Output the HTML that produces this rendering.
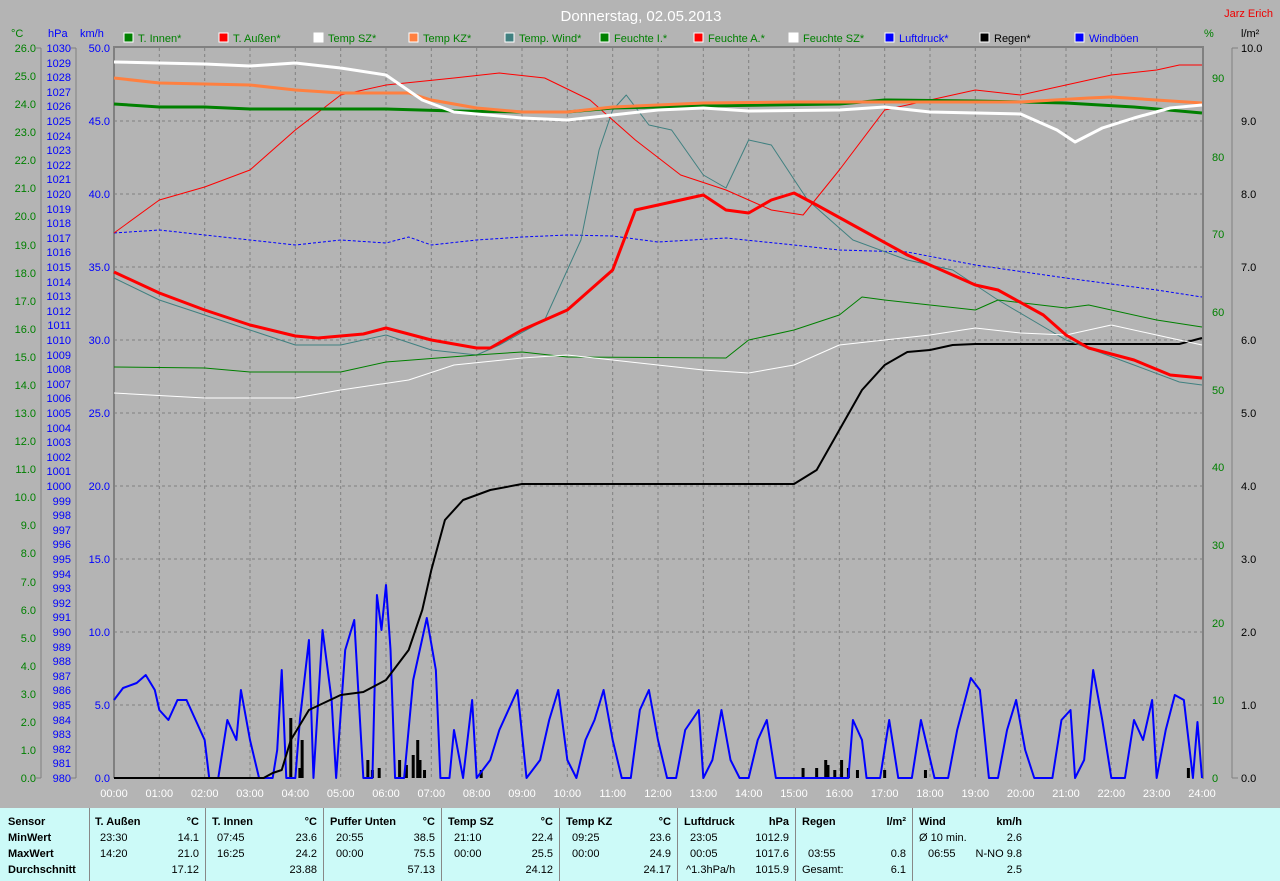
<!DOCTYPE html>
<html><head><meta charset="utf-8"><style>
body{margin:0;width:1280px;height:881px;background:#b4b4b4;overflow:hidden;font-family:"Liberation Sans",sans-serif;}
svg{position:absolute;left:0;top:0}
.t{position:absolute;font-size:11px;white-space:nowrap}
#tbl{position:absolute;left:0;top:808px;width:1280px;height:73px;background:#ccfaf8;}
.c{position:absolute;font-size:11px;white-space:nowrap;color:#000}
.b{font-weight:bold}
.r{text-align:right}
.vl{position:absolute;top:0;width:1px;height:73px;background:#888}
</style></head><body>
<svg width="1280" height="881" font-family="Liberation Sans, sans-serif" font-size="11">
<text x="641" y="21" fill="#fff" font-size="15" text-anchor="middle">Donnerstag, 02.05.2013</text>
<text x="1273" y="17" fill="#e00" font-size="11" text-anchor="end">Jarz Erich</text>
<!-- legend -->
<g font-size="11">
<rect x="124" y="33" width="9" height="9" fill="#008000" stroke="#fff"/><text x="138" y="42" fill="#008000">T. Innen*</text>
<rect x="219" y="33" width="9" height="9" fill="#f00" stroke="#fff"/><text x="233" y="42" fill="#008000">T. Außen*</text>
<rect x="314" y="33" width="9" height="9" fill="#fff" stroke="#fff"/><text x="328" y="42" fill="#008000">Temp SZ*</text>
<rect x="409" y="33" width="9" height="9" fill="#ff8040" stroke="#fff"/><text x="423" y="42" fill="#008000">Temp KZ*</text>
<rect x="505" y="33" width="9" height="9" fill="#408080" stroke="#fff"/><text x="519" y="42" fill="#008000">Temp. Wind*</text>
<rect x="600" y="33" width="9" height="9" fill="#008000" stroke="#fff"/><text x="614" y="42" fill="#008000">Feuchte I.*</text>
<rect x="694" y="33" width="9" height="9" fill="#f00" stroke="#fff"/><text x="708" y="42" fill="#008000">Feuchte A.*</text>
<rect x="789" y="33" width="9" height="9" fill="#fff" stroke="#fff"/><text x="803" y="42" fill="#008000">Feuchte SZ*</text>
<rect x="885" y="33" width="9" height="9" fill="#00f" stroke="#fff"/><text x="899" y="42" fill="#00f">Luftdruck*</text>
<rect x="980" y="33" width="9" height="9" fill="#000" stroke="#fff"/><text x="994" y="42" fill="#000">Regen*</text>
<rect x="1075" y="33" width="9" height="9" fill="#00f" stroke="#fff"/><text x="1089" y="42" fill="#00f">Windböen</text>
</g>
<text x="11" y="37" fill="#008000">°C</text>
<text x="48" y="37" fill="#00f">hPa</text>
<text x="80" y="37" fill="#00f">km/h</text>
<text x="1204" y="37" fill="#008000">%</text>
<text x="1241" y="37" fill="#000">l/m²</text>
<!-- plot grid -->
<g stroke="#808080" stroke-dasharray="3,3" stroke-width="1">
<path d="M159.3 48V778M204.7 48V778M250 48V778M295.3 48V778M340.7 48V778M386 48V778M431.3 48V778M476.7 48V778M522 48V778M567.3 48V778M612.7 48V778M658 48V778M703.3 48V778M748.7 48V778M794 48V778M839.3 48V778M884.7 48V778M930 48V778M975.3 48V778M1020.7 48V778M1066 48V778M1111.3 48V778M1156.7 48V778"/>
<path d="M114 121H1202M114 194H1202M114 267H1202M114 340H1202M114 413H1202M114 486H1202M114 559H1202M114 632H1202M114 705H1202"/>
</g>
<path d="M114 778V47H1203V779" fill="none" stroke="#808080" stroke-width="2"/>
<!-- left axes -->
<g stroke="#808080" fill="none">
<path d="M41 48V778M76 48V778M1232 48V778"/>
</g>
<g id="axes"></g>
<!-- curves -->
<g transform="translate(114,0) scale(45.333,1)" fill="none" stroke-linejoin="round">
<!-- rain bars -->
<g stroke="#000" stroke-width="3" vector-effect="non-scaling-stroke">
<path vector-effect="non-scaling-stroke" d="M3.9 778V718M4.1 778V768M4.15 778V740M5.6 778V760M5.7 778V770M5.85 778V768M6.3 778V760M6.45 778V765M6.6 778V755M6.7 778V740M6.75 778V760M6.85 778V770M8.1 778V770M15.2 778V768M15.5 778V768M15.7 778V760M15.75 778V765M15.9 778V770M16.05 778V760M16.2 778V768M16.4 778V770M17.0 778V770M17.9 778V770M23.7 778V768"/>
</g>
<path vector-effect="non-scaling-stroke" stroke="#00f" stroke-width="2" d="M0 700L0.2 688L0.5 683L0.7 675L0.9 690L1 710L1.2 720L1.4 700L1.6 700L1.8 720L2 740L2.1 778L2.3 778L2.5 720L2.7 740L2.8 690L3 740L3.2 778L3.5 778L3.6 750L3.7 670L3.8 778L4 778L4.1 720L4.3 640L4.4 778L4.6 630L4.8 700L4.9 778L5.1 650L5.3 620L5.4 700L5.5 778L5.7 778L5.8 595L5.9 630L6 585L6.1 650L6.2 778L6.4 778L6.6 680L6.9 618L7.1 670L7.2 778L7.4 778L7.5 730L7.7 778L7.9 700L8 778L8.3 760L8.5 730L8.9 690L9.1 778L9.4 760L9.6 720L9.8 690L10 760L10.2 778L10.4 740L10.6 720L10.8 690L11 740L11.2 778L11.4 778L11.6 710L11.8 690L12 740L12.2 778L12.4 778L12.6 730L12.9 710L13 778L13.2 760L13.4 710L13.6 760L13.8 778L14 778L14.2 740L14.4 720L14.6 778L16.2 778L16.3 720L16.5 740L16.6 778L16.9 778L17.1 720L17.3 778L17.6 778L17.8 720L18.1 778L18.4 778L18.6 730L18.9 678L19.1 690L19.3 778L19.5 778L19.7 730L19.9 700L20.1 750L20.3 778L20.7 778L20.9 720L21.1 710L21.2 778L21.4 760L21.6 670L21.8 720L22 778L22.3 778L22.5 720L22.7 740L22.9 700L23 778L23.2 730L23.4 695L23.6 700L23.8 778L23.9 722L24 778"/>
<path vector-effect="non-scaling-stroke" stroke="#000" stroke-width="2" d="M0 778L3.3 778L3.5 773L3.7 770L3.9 740L4.3 710L5 695L5.5 692L6 680L6.5 650L6.8 610L7 570L7.3 520L7.7 500L8.3 490L9 484L15 484L15.5 470L16 430L16.5 390L17 365L17.5 352L18 350L18.5 345L19 344L23.5 344L24 338"/>
<path vector-effect="non-scaling-stroke" stroke="#00f" stroke-width="1" stroke-dasharray="3,2" d="M0 233L1 230L3 240L4 245L5 240L6 243L6.5 237L7 245L8 240L9 237L10 235L11 236L12 242L13.5 238L15 245L16 250L17.5 252L19 265L21 278L23 290L24 297"/>
<path vector-effect="non-scaling-stroke" stroke="#408080" stroke-width="1" d="M0 278L1 300L2 315L3 330L4 345L5 345L6 335L7 350L8 355L8.5 345L9.5 320L10.3 240L10.7 150L11 110L11.3 95L11.8 125L12.3 130L13 175L13.5 188L14 140L14.5 145L15.3 200L16.3 240L17.5 260L18.5 270L19.5 300L21 340L22.5 365L23.5 382L24 385"/>
<path vector-effect="non-scaling-stroke" stroke="#008000" stroke-width="1" d="M0 367L2 368L3 372L5 372L6 362L8 355L9 352L10 357L13.5 358L14 340L15 330L16 315L16.5 297L17 300L18 305L19 310L19.5 300L21 308L21.5 305L23 320L24 327"/>
<path vector-effect="non-scaling-stroke" stroke="#fff" stroke-width="1" d="M0 393L2 398L4 398L5 390L6.5 380L7.5 365L9 358L10 355L11 360L13 370L14 373L15 365L16 345L17 340L18 335L19 328L20 333L21 335L22 325L23 335L24 345"/>
<path vector-effect="non-scaling-stroke" stroke="#f00" stroke-width="1" d="M0 233L1 200L2 187L3 170L4 130L5 95L6 85L7.5 78L8.5 73L9.5 78L10.5 100L11.5 140L12.5 175L13.5 190L14.5 210L15.2 215L16 170L17 110L18 100L19 90L20 95L21 85L22 75L23 70L23.5 65L24 65"/>
<path vector-effect="non-scaling-stroke" stroke="#f00" stroke-width="3" d="M0 272L1 293L2 310L3 325L4 336L4.5 338L5.5 334L6 328L7 340L8 348L8.3 348L9 330L10 310L11 270L11.5 210L12.5 200L13 195L13.5 210L14 213L14.5 200L15 193L15.5 205L16.5 230L17.5 255L18 265L19 285L19.5 290L20.5 315L21 335L21.5 348L22.5 360L23.3 375L24 378"/>
<path vector-effect="non-scaling-stroke" stroke="#008000" stroke-width="3" d="M0 104L1 107L2 107L3 109L6 109L7.5 111L9 112L10 112L11 108L13 106L16 104L17 100L19 101L21 103L22.5 107L24 113"/>
<path vector-effect="non-scaling-stroke" stroke="#ff8040" stroke-width="3" d="M0 78L1 83L3 85L4 90L5 93L6.5 93L7 100L8 108L9 112L10 112L11 107L13 103L15 102L20 102L21.5 98L22 97L24 103"/>
<path vector-effect="non-scaling-stroke" stroke="#fff" stroke-width="3" d="M0 62L1 63L2 64L3 66L4 63L5 68L6 75L6.8 100L7.5 112L9 118L10 120L11 115L12 110L13 108L14 111L16 110L17 107L18 112L20 114L20.2 118L20.8 130L21.2 142L21.8 128L22.5 118L23.3 108L24 105"/>
</g>
<!-- axis labels -->
<g fill="#008000" text-anchor="end">
<text x="36" y="52">26.0</text><text x="36" y="80">25.0</text><text x="36" y="108">24.0</text><text x="36" y="136">23.0</text><text x="36" y="164">22.0</text><text x="36" y="192">21.0</text><text x="36" y="220">20.0</text><text x="36" y="249">19.0</text><text x="36" y="277">18.0</text><text x="36" y="305">17.0</text><text x="36" y="333">16.0</text><text x="36" y="361">15.0</text><text x="36" y="389">14.0</text><text x="36" y="417">13.0</text><text x="36" y="445">12.0</text><text x="36" y="473">11.0</text><text x="36" y="501">10.0</text><text x="36" y="529">9.0</text><text x="36" y="557">8.0</text><text x="36" y="586">7.0</text><text x="36" y="614">6.0</text><text x="36" y="642">5.0</text><text x="36" y="670">4.0</text><text x="36" y="698">3.0</text><text x="36" y="726">2.0</text><text x="36" y="754">1.0</text><text x="36" y="782">0.0</text>
</g>
<g fill="#00f" text-anchor="end">
<text x="71" y="52">1030</text><text x="71" y="67">1029</text><text x="71" y="81">1028</text><text x="71" y="96">1027</text><text x="71" y="110">1026</text><text x="71" y="125">1025</text><text x="71" y="140">1024</text><text x="71" y="154">1023</text><text x="71" y="169">1022</text><text x="71" y="183">1021</text><text x="71" y="198">1020</text><text x="71" y="213">1019</text><text x="71" y="227">1018</text><text x="71" y="242">1017</text><text x="71" y="256">1016</text><text x="71" y="271">1015</text><text x="71" y="286">1014</text><text x="71" y="300">1013</text><text x="71" y="315">1012</text><text x="71" y="329">1011</text><text x="71" y="344">1010</text><text x="71" y="359">1009</text><text x="71" y="373">1008</text><text x="71" y="388">1007</text><text x="71" y="402">1006</text><text x="71" y="417">1005</text><text x="71" y="432">1004</text><text x="71" y="446">1003</text><text x="71" y="461">1002</text><text x="71" y="475">1001</text><text x="71" y="490">1000</text><text x="71" y="505">999</text><text x="71" y="519">998</text><text x="71" y="534">997</text><text x="71" y="548">996</text><text x="71" y="563">995</text><text x="71" y="578">994</text><text x="71" y="592">993</text><text x="71" y="607">992</text><text x="71" y="621">991</text><text x="71" y="636">990</text><text x="71" y="651">989</text><text x="71" y="665">988</text><text x="71" y="680">987</text><text x="71" y="694">986</text><text x="71" y="709">985</text><text x="71" y="724">984</text><text x="71" y="738">983</text><text x="71" y="753">982</text><text x="71" y="767">981</text><text x="71" y="782">980</text>
<text x="110" y="52">50.0</text><text x="110" y="125">45.0</text><text x="110" y="198">40.0</text><text x="110" y="271">35.0</text><text x="110" y="344">30.0</text><text x="110" y="417">25.0</text><text x="110" y="490">20.0</text><text x="110" y="563">15.0</text><text x="110" y="636">10.0</text><text x="110" y="709">5.0</text><text x="110" y="782">0.0</text>
</g>
<g fill="#008000">
<text x="1212" y="82">90</text><text x="1212" y="161">80</text><text x="1212" y="238">70</text><text x="1212" y="316">60</text><text x="1212" y="394">50</text><text x="1212" y="471">40</text><text x="1212" y="549">30</text><text x="1212" y="627">20</text><text x="1212" y="704">10</text><text x="1212" y="782">0</text>
</g>
<g fill="#000">
<text x="1241" y="52">10.0</text><text x="1241" y="125">9.0</text><text x="1241" y="198">8.0</text><text x="1241" y="271">7.0</text><text x="1241" y="344">6.0</text><text x="1241" y="417">5.0</text><text x="1241" y="490">4.0</text><text x="1241" y="563">3.0</text><text x="1241" y="636">2.0</text><text x="1241" y="709">1.0</text><text x="1241" y="782">0.0</text>
</g>
<g stroke="#808080"><path d="M36 48h5M36 778h5M71 48h5M71 778h5M1232 48h6M1232 778h6"/></g>
<g fill="#fff" text-anchor="middle">
<text x="114" y="797">00:00</text><text x="159.3" y="797">01:00</text><text x="204.7" y="797">02:00</text><text x="250" y="797">03:00</text><text x="295.3" y="797">04:00</text><text x="340.7" y="797">05:00</text><text x="386" y="797">06:00</text><text x="431.3" y="797">07:00</text><text x="476.7" y="797">08:00</text><text x="522" y="797">09:00</text><text x="567.3" y="797">10:00</text><text x="612.7" y="797">11:00</text><text x="658" y="797">12:00</text><text x="703.3" y="797">13:00</text><text x="748.7" y="797">14:00</text><text x="794" y="797">15:00</text><text x="839.3" y="797">16:00</text><text x="884.7" y="797">17:00</text><text x="930" y="797">18:00</text><text x="975.3" y="797">19:00</text><text x="1020.7" y="797">20:00</text><text x="1066" y="797">21:00</text><text x="1111.3" y="797">22:00</text><text x="1156.7" y="797">23:00</text><text x="1202" y="797">24:00</text>
</g>
</svg>
<div id="tbl">
<div class="vl" style="left:89px"></div><div class="vl" style="left:205px"></div><div class="vl" style="left:323px"></div><div class="vl" style="left:441px"></div><div class="vl" style="left:559px"></div><div class="vl" style="left:677px"></div><div class="vl" style="left:795px"></div><div class="vl" style="left:912px"></div>
<div class="c b" style="left:8px;top:8px">Sensor</div><div class="c b" style="left:8px;top:24px">MinWert</div><div class="c b" style="left:8px;top:40px">MaxWert</div><div class="c b" style="left:8px;top:56px">Durchschnitt</div>

<div class="c b" style="left:95px;top:8px">T. Außen</div><div class="c b r" style="left:160px;width:39px;top:8px">°C</div>
<div class="c" style="left:100px;top:24px">23:30</div><div class="c r" style="left:150px;width:49px;top:24px">14.1</div>
<div class="c" style="left:100px;top:40px">14:20</div><div class="c r" style="left:150px;width:49px;top:40px">21.0</div>
<div class="c r" style="left:150px;width:49px;top:56px">17.12</div>

<div class="c b" style="left:212px;top:8px">T. Innen</div><div class="c b r" style="left:277px;width:40px;top:8px">°C</div>
<div class="c" style="left:217px;top:24px">07:45</div><div class="c r" style="left:267px;width:50px;top:24px">23.6</div>
<div class="c" style="left:217px;top:40px">16:25</div><div class="c r" style="left:267px;width:50px;top:40px">24.2</div>
<div class="c r" style="left:267px;width:50px;top:56px">23.88</div>

<div class="c b" style="left:330px;top:8px">Puffer Unten</div><div class="c b r" style="left:395px;width:40px;top:8px">°C</div>
<div class="c" style="left:336px;top:24px">20:55</div><div class="c r" style="left:385px;width:50px;top:24px">38.5</div>
<div class="c" style="left:336px;top:40px">00:00</div><div class="c r" style="left:385px;width:50px;top:40px">75.5</div>
<div class="c r" style="left:385px;width:50px;top:56px">57.13</div>

<div class="c b" style="left:448px;top:8px">Temp SZ</div><div class="c b r" style="left:513px;width:40px;top:8px">°C</div>
<div class="c" style="left:454px;top:24px">21:10</div><div class="c r" style="left:503px;width:50px;top:24px">22.4</div>
<div class="c" style="left:454px;top:40px">00:00</div><div class="c r" style="left:503px;width:50px;top:40px">25.5</div>
<div class="c r" style="left:503px;width:50px;top:56px">24.12</div>

<div class="c b" style="left:566px;top:8px">Temp KZ</div><div class="c b r" style="left:631px;width:40px;top:8px">°C</div>
<div class="c" style="left:572px;top:24px">09:25</div><div class="c r" style="left:621px;width:50px;top:24px">23.6</div>
<div class="c" style="left:572px;top:40px">00:00</div><div class="c r" style="left:621px;width:50px;top:40px">24.9</div>
<div class="c r" style="left:621px;width:50px;top:56px">24.17</div>

<div class="c b" style="left:684px;top:8px">Luftdruck</div><div class="c b r" style="left:749px;width:40px;top:8px">hPa</div>
<div class="c" style="left:690px;top:24px">23:05</div><div class="c r" style="left:729px;width:60px;top:24px">1012.9</div>
<div class="c" style="left:690px;top:40px">00:05</div><div class="c r" style="left:729px;width:60px;top:40px">1017.6</div>
<div class="c" style="left:686px;top:56px">^1.3hPa/h</div><div class="c r" style="left:729px;width:60px;top:56px">1015.9</div>

<div class="c b" style="left:802px;top:8px">Regen</div><div class="c b r" style="left:866px;width:40px;top:8px">l/m²</div>
<div class="c" style="left:808px;top:40px">03:55</div><div class="c r" style="left:856px;width:50px;top:40px">0.8</div>
<div class="c" style="left:802px;top:56px">Gesamt:</div><div class="c r" style="left:856px;width:50px;top:56px">6.1</div>

<div class="c b" style="left:919px;top:8px">Wind</div><div class="c b r" style="left:972px;width:50px;top:8px">km/h</div>
<div class="c" style="left:919px;top:24px">Ø 10 min.</div><div class="c r" style="left:972px;width:50px;top:24px">2.6</div>
<div class="c" style="left:928px;top:40px">06:55</div><div class="c r" style="left:962px;width:60px;top:40px">N-NO 9.8</div>
<div class="c r" style="left:972px;width:50px;top:56px">2.5</div>
</div>
</body></html>
